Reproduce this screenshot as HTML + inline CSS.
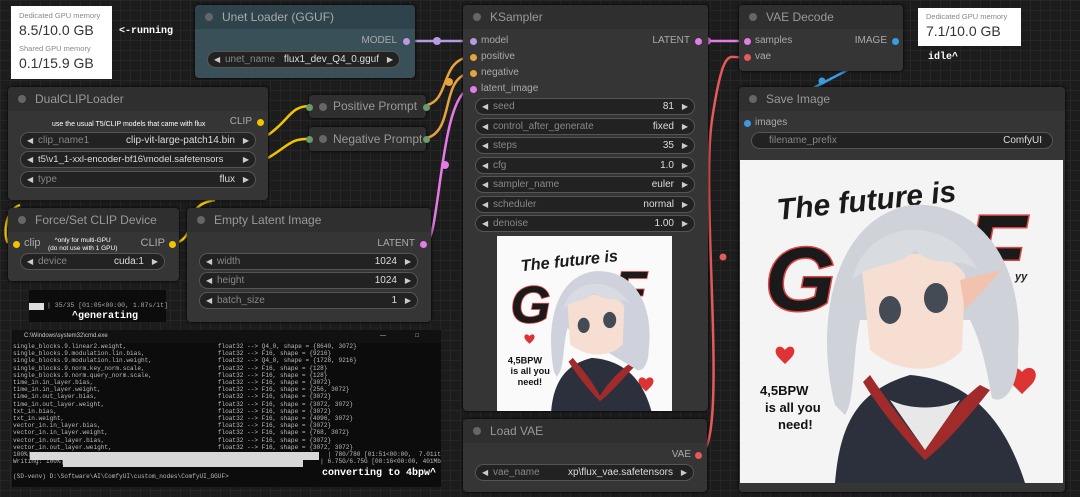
<!DOCTYPE html>
<html><head><meta charset="utf-8"><style>
*{box-sizing:border-box;margin:0;padding:0}
body{width:1080px;height:497px;overflow:hidden;position:relative;background:#1c1c1c;
background-image:linear-gradient(#262626 1px,transparent 1px),linear-gradient(90deg,#262626 1px,transparent 1px);background-size:10px 10px;
font-family:"Liberation Sans",sans-serif;color:#bbb;font-size:10px;white-space:nowrap}
.a{position:absolute}
.node{position:absolute;background:#353535;border-radius:4px;box-shadow:0 0 3px #000}
.hd{height:24px;background:#2f2f2f;border-radius:4px 4px 0 0;padding-left:27px;line-height:24px;font-size:12px;color:#999;position:relative}
.hd:before{content:"";position:absolute;left:10px;top:8px;width:8px;height:8px;border-radius:50%;background:#666}
.pill{position:absolute;height:17px;background:#222;border:1px solid #555;border-radius:9px;font-size:10px;line-height:15px;color:#888}
.pill .l{position:absolute;left:6px;color:#ccc;font-size:8px}
.pill .r{position:absolute;right:6px;color:#ccc;font-size:8px}
.pill .n{position:absolute;left:17px}
.pill .v{position:absolute;right:20px;color:#ddd}
.dot{position:absolute;width:7px;height:7px;border-radius:50%}
.slot{position:absolute;font-size:10px;color:#aaa}
.mono{font-family:"Liberation Mono",monospace}
</style></head><body>

<svg class="a" style="left:0;top:0" width="1080" height="497">
<g fill="none" stroke-width="2.5">
<path d="M408 41 H470" stroke="#b79be0"/>
<path d="M668 41 H742" stroke="#e67ae6"/>
<path d="M427 105 C450 100,440 60,470 57" stroke="#e8a33c"/>
<path d="M427 138 C455 130,440 78,470 73" stroke="#e8a33c"/>
<path d="M426 243 C440 240,440 95,470 89" stroke="#e67ae6"/>
<path d="M268 135 C290 120,290 105,312 106" stroke="#f2c400"/>
<path d="M268 158 C290 145,290 138,312 139" stroke="#f2c400"/>
<path d="M176 243 C200 235,180 205,215 200" stroke="#f2c400"/>
<path d="M8 243 C3 235,5 210,20 205" stroke="#f2c400"/>
<path d="M699 455 C730 450,700 200,712 120 S 730 60,742 57" stroke="#e85a5a"/>
<path d="M895 45 L800 95" stroke="#3a9be0"/>
</g>
<circle cx="437" cy="41" r="4" fill="#b79be0"/><circle cx="707" cy="41" r="4" fill="#e67ae6"/>
<circle cx="449" cy="82" r="4" fill="#e8a33c"/><circle cx="445" cy="165" r="4" fill="#e67ae6"/>
<circle cx="723" cy="257" r="3.5" fill="#e85a5a"/><circle cx="822" cy="81" r="3.5" fill="#3a9be0"/>
</svg>

<div class="a" style="left:11px;top:6px;width:101px;height:73px;background:#fff;padding:5px 8px;color:#333">
<div style="font-size:7.5px;color:#888">Dedicated GPU memory</div>
<div style="font-size:14px;margin-top:2px">8.5/10.0 GB</div>
<div style="font-size:7.5px;color:#888;margin-top:6px">Shared GPU memory</div>
<div style="font-size:14px;margin-top:2px">0.1/15.9 GB</div></div>
<div class="a mono" style="left:119px;top:26px;color:#fff;font-weight:bold;font-size:10px">&lt;-running</div>

<div class="node" style="left:195px;top:5px;width:220px;height:73px;background:#395058">
<div class="hd" style="background:#2e434b;color:#aaa">Unet Loader (GGUF)</div>
<div class="slot" style="right:18px;top:30px">MODEL</div><div class="dot" style="right:5px;top:33px;background:#b79be0"></div>
<div class="pill" style="left:12px;top:46px;width:193px"><span class="l">◀</span><span class="n">unet_name</span><span class="v">flux1_dev_Q4_0.gguf</span><span class="r">▶</span></div>
</div>

<div class="node" style="left:8px;top:87px;width:260px;height:113px">
<div class="hd">DualCLIPLoader</div>
<div class="a" style="left:44px;top:34px;font-size:7px;color:#fff">use the usual T5/CLIP models that came with flux</div>
<div class="slot" style="right:16px;top:29px">CLIP</div><div class="dot" style="right:4px;top:32px;background:#f2c400"></div>
<div class="pill" style="left:12px;top:45px;width:236px"><span class="l">◀</span><span class="n">clip_name1</span><span class="v">clip-vit-large-patch14.bin</span><span class="r">▶</span></div>
<div class="pill" style="left:12px;top:64px;width:236px"><span class="l">◀</span><span class="n" style="color:#ddd;font-size:9.5px">t5\v1_1-xxl-encoder-bf16\model.safetensors</span><span class="r">▶</span></div>
<div class="pill" style="left:12px;top:84px;width:236px"><span class="l">◀</span><span class="n">type</span><span class="v">flux</span><span class="r">▶</span></div>
</div>

<div class="node" style="left:309px;top:95px;width:117px;height:23px"><div class="hd" style="height:23px;line-height:23px;padding-left:24px;border-radius:4px">Positive Prompt</div></div>
<div class="node" style="left:309px;top:127px;width:117px;height:24px"><div class="hd" style="height:24px;padding-left:24px;border-radius:4px">Negative Prompt</div></div>
<div class="dot" style="left:306px;top:104px;background:#6a9a6a"></div><div class="dot" style="left:423px;top:104px;background:#6a9a6a"></div>
<div class="dot" style="left:306px;top:136px;background:#6a9a6a"></div><div class="dot" style="left:423px;top:136px;background:#6a9a6a"></div>

<div class="node" style="left:8px;top:208px;width:171px;height:73px">
<div class="hd">Force/Set CLIP Device</div>
<div class="dot" style="left:5px;top:33px;background:#f2c400"></div><div class="slot" style="left:16px;top:29px;font-size:11px">clip</div>
<div class="a" style="left:40px;top:29px;font-size:6.5px;color:#fff;text-align:center;line-height:8px">^only for multi-GPU<br>(do not use with 1 GPU)</div>
<div class="slot" style="right:14px;top:29px;font-size:11px">CLIP</div><div class="dot" style="right:3px;top:33px;background:#f2c400"></div>
<div class="pill" style="left:12px;top:45px;width:145px"><span class="l">◀</span><span class="n">device</span><span class="v">cuda:1</span><span class="r">▶</span></div>
</div>

<div class="node" style="left:187px;top:208px;width:244px;height:114px">
<div class="hd">Empty Latent Image</div>
<div class="slot" style="right:16px;top:30px">LATENT</div><div class="dot" style="right:4px;top:33px;background:#e67ae6"></div>
<div class="pill" style="left:12px;top:45px;width:219px"><span class="l">◀</span><span class="n">width</span><span class="v">1024</span><span class="r">▶</span></div>
<div class="pill" style="left:12px;top:64px;width:219px"><span class="l">◀</span><span class="n">height</span><span class="v">1024</span><span class="r">▶</span></div>
<div class="pill" style="left:12px;top:84px;width:219px"><span class="l">◀</span><span class="n">batch_size</span><span class="v">1</span><span class="r">▶</span></div>
</div>

<div class="a" style="left:29px;top:290px;width:137px;height:32px;background:#0c0c0c"></div>
<div class="a" style="left:29px;top:303px;width:15px;height:7px;background:#ddd"></div>
<div class="a mono" style="left:47px;top:302px;font-size:6.5px;color:#aaa">| 35/35 [01:05&lt;00:00,  1.87s/it]</div>
<div class="a mono" style="left:72px;top:311px;font-size:10px;color:#fff;font-weight:bold">^generating</div>

<div class="a" style="left:12px;top:330px;width:429px;height:157px;background:#0c0c0c;overflow:hidden">
<div style="height:13px;background:#111;font-size:6px;color:#ccc;padding:3px 0 0 12px">C:\Windows\system32\cmd.exe<span style="position:absolute;right:55px">—</span><span style="position:absolute;right:22px">□</span></div>
<pre class="mono" style="font-size:6.1px;line-height:7.2px;color:#bbb;padding-left:1px">single_blocks.9.linear2.weight,                         float32 --&gt; Q4_0, shape = {8640, 3072}
single_blocks.9.modulation.lin.bias,                    float32 --&gt; F16, shape = {9216}
single_blocks.9.modulation.lin.weight,                  float32 --&gt; Q4_0, shape = {1728, 9216}
single_blocks.9.norm.key_norm.scale,                    float32 --&gt; F16, shape = {128}
single_blocks.9.norm.query_norm.scale,                  float32 --&gt; F16, shape = {128}
time_in.in_layer.bias,                                  float32 --&gt; F16, shape = {3072}
time_in.in_layer.weight,                                float32 --&gt; F16, shape = {256, 3072}
time_in.out_layer.bias,                                 float32 --&gt; F16, shape = {3072}
time_in.out_layer.weight,                               float32 --&gt; F16, shape = {3072, 3072}
txt_in.bias,                                            float32 --&gt; F16, shape = {3072}
txt_in.weight,                                          float32 --&gt; F16, shape = {4096, 3072}
vector_in.in_layer.bias,                                float32 --&gt; F16, shape = {3072}
vector_in.in_layer.weight,                              float32 --&gt; F16, shape = {768, 3072}
vector_in.out_layer.bias,                               float32 --&gt; F16, shape = {3072}
vector_in.out_layer.weight,                             float32 --&gt; F16, shape = {3072, 3072}
100%|                                                                                 | 780/780 [01:51&lt;00:00,  7.01it/s]
Writing: 100%|                                                                      | 6.75G/6.75G [00:16&lt;00:00, 401Mbyte/s]

(SD-venv) D:\Software\AI\ComfyUI\custom_nodes\ComfyUI_GGUF&gt;</pre>
<div class="a" style="left:18px;top:122px;width:289px;height:8px;background:#d8d8d8"></div>
<div class="a" style="left:51px;top:130px;width:240px;height:7px;background:#d8d8d8"></div>
<div class="a mono" style="left:310px;top:138px;font-size:10px;color:#fff;font-weight:bold">converting to 4bpw^</div>
</div>

<div class="node" style="left:463px;top:5px;width:245px;height:406px">
<div class="hd">KSampler</div>
<div class="dot" style="left:7px;top:33px;background:#b79be0"></div><div class="slot" style="left:18px;top:30px">model</div>
<div class="dot" style="left:7px;top:49px;background:#e8a33c"></div><div class="slot" style="left:18px;top:46px">positive</div>
<div class="dot" style="left:7px;top:65px;background:#e8a33c"></div><div class="slot" style="left:18px;top:62px">negative</div>
<div class="dot" style="left:7px;top:81px;background:#e67ae6"></div><div class="slot" style="left:18px;top:78px">latent_image</div>
<div class="slot" style="right:18px;top:30px">LATENT</div><div class="dot" style="right:6px;top:33px;background:#e67ae6"></div>
<div class="pill" style="left:12px;top:93px;width:220px"><span class="l">◀</span><span class="n">seed</span><span class="v">81</span><span class="r">▶</span></div>
<div class="pill" style="left:12px;top:113px;width:220px"><span class="l">◀</span><span class="n">control_after_generate</span><span class="v">fixed</span><span class="r">▶</span></div>
<div class="pill" style="left:12px;top:132px;width:220px"><span class="l">◀</span><span class="n">steps</span><span class="v">35</span><span class="r">▶</span></div>
<div class="pill" style="left:12px;top:152px;width:220px"><span class="l">◀</span><span class="n">cfg</span><span class="v">1.0</span><span class="r">▶</span></div>
<div class="pill" style="left:12px;top:171px;width:220px"><span class="l">◀</span><span class="n">sampler_name</span><span class="v">euler</span><span class="r">▶</span></div>
<div class="pill" style="left:12px;top:191px;width:220px"><span class="l">◀</span><span class="n">scheduler</span><span class="v">normal</span><span class="r">▶</span></div>
<div class="pill" style="left:12px;top:210px;width:220px"><span class="l">◀</span><span class="n">denoise</span><span class="v">1.00</span><span class="r">▶</span></div>
</div>

<div class="node" style="left:463px;top:419px;width:244px;height:73px">
<div class="hd">Load VAE</div>
<div class="slot" style="right:16px;top:30px">VAE</div><div class="dot" style="right:5px;top:33px;background:#e85a5a"></div>
<div class="pill" style="left:12px;top:45px;width:219px"><span class="l">◀</span><span class="n">vae_name</span><span class="v">xp\flux_vae.safetensors</span><span class="r">▶</span></div>
</div>

<div class="node" style="left:739px;top:5px;width:164px;height:66px">
<div class="hd">VAE Decode</div>
<div class="dot" style="left:5px;top:33px;background:#e67ae6"></div><div class="slot" style="left:16px;top:30px">samples</div>
<div class="dot" style="left:5px;top:49px;background:#e85a5a"></div><div class="slot" style="left:16px;top:46px">vae</div>
<div class="slot" style="right:16px;top:30px">IMAGE</div><div class="dot" style="right:4px;top:33px;background:#3a9be0"></div>
</div>

<div class="a" style="left:918px;top:8px;width:103px;height:38px;background:#fff;padding:4px 8px;color:#333">
<div style="font-size:7.5px;color:#888">Dedicated GPU memory</div><div style="font-size:14px;margin-top:2px">7.1/10.0 GB</div></div>
<div class="a mono" style="left:928px;top:52px;color:#fff;font-weight:bold;font-size:10px">idle^</div>

<div class="node" style="left:739px;top:87px;width:326px;height:405px">
<div class="hd">Save Image</div>
<div class="dot" style="left:5px;top:33px;background:#3a9be0"></div><div class="slot" style="left:16px;top:30px">images</div>
<div class="pill" style="left:12px;top:45px;width:302px"><span class="n">filename_prefix</span><span class="v" style="right:10px">ComfyUI</span></div>
</div>

<svg class="a" style="left:740px;top:160px" width="323" height="323" viewBox="0 0 323 323">
<rect width="323" height="323" fill="#f4f4f4"/>
<g font-family="Liberation Sans,sans-serif" font-weight="bold" font-style="italic">
<text x="38" y="60" font-size="30" fill="#1a1a1a" transform="rotate(-6 38 60)">The future is</text>
<text x="25" y="150" font-size="90" fill="#1a1a1a" stroke="#d44" stroke-width="3" paint-order="stroke">G</text>
<text x="225" y="125" font-size="100" fill="#1a1a1a" stroke="#d44" stroke-width="3" paint-order="stroke">F</text>
<text x="275" y="120" font-size="11" fill="#222">yy</text>
<text x="20" y="235" font-size="13" fill="#111" font-style="normal">4,5BPW</text>
<text x="25" y="252" font-size="13" fill="#111" font-style="normal">is all you</text>
<text x="38" y="269" font-size="13" fill="#111" font-style="normal">need!</text>
</g>
<path d="M45 190 c-6 -8 -14 0 -6 8 l6 6 6 -6 c8 -8 0 -16 -6 -8z" fill="#d33"/>
<path d="M282 212 c-8 -10 -20 0 -10 12 l10 10 10 -10 c10 -12 -2 -22 -10 -12z" fill="#d33"/>
<path d="M95 323 C100 260,120 230,170 215 C230 220,265 260,285 323z" fill="#2b303c"/>
<path d="M130 215 C150 245,170 270,185 290 C200 265,220 240,240 225 L250 230 C230 255,205 285,185 300 C165 280,140 250,123 222z" fill="#a12a2a"/>
<path d="M150 240 L185 290 L220 240 C200 250,170 250,150 240z" fill="#e8e8e8"/>
<path d="M95 245 C75 170,90 60,170 45 C245 40,285 110,278 190 C280 230,262 245,252 238 C245 200,240 180,230 160 L120 160 C112 200,115 240,105 255z" fill="#cfd2d8"/>
<path d="M122 110 C130 90,210 85,225 115 L222 190 C200 215,160 215,130 190z" fill="#f6ded2"/>
<path d="M112 120 C125 60,205 50,238 110 C218 95,195 110,175 90 C155 110,135 100,112 120z" fill="#d8dbe0"/>
<ellipse cx="150" cy="150" rx="11" ry="14" fill="#444b55"/><ellipse cx="196" cy="138" rx="12" ry="15" fill="#444b55"/>
<path d="M220 120 L262 110 L225 150z" fill="#f2c2ae"/>
</svg>

<div class="a" style="left:497px;top:236px;width:175px;height:175px;overflow:hidden">
<svg width="175" height="175" viewBox="0 0 323 323">
<rect width="323" height="323" fill="#fafafa"/>
<g font-family="Liberation Sans,sans-serif" font-weight="bold" font-style="italic">
<text x="45" y="65" font-size="30" fill="#1a1a1a" transform="rotate(-6 45 65)">The future is</text>
<text x="25" y="160" font-size="95" fill="#1a1a1a" stroke="#d44" stroke-width="3" paint-order="stroke">G</text>
<text x="215" y="135" font-size="100" fill="#1a1a1a" stroke="#d44" stroke-width="3" paint-order="stroke">F</text>
<text x="20" y="235" font-size="17" fill="#111" font-style="normal">4,5BPW</text>
<text x="25" y="255" font-size="17" fill="#111" font-style="normal">is all you</text>
<text x="38" y="275" font-size="17" fill="#111" font-style="normal">need!</text>
</g>
<path d="M60 185 c-6 -8 -14 0 -6 8 l6 6 6 -6 c8 -8 0 -16 -6 -8z" fill="#d33"/>
<path d="M275 265 c-8 -10 -20 0 -10 12 l10 10 10 -10 c10 -12 -2 -22 -10 -12z" fill="#d33"/>
<path d="M100 323 C105 260,135 235,175 225 C240 230,270 270,285 323z" fill="#2b303c"/>
<path d="M140 225 C165 255,180 275,190 295 C205 270,225 250,245 235 L255 240 C235 260,210 290,190 305 C170 285,150 260,132 232z" fill="#a12a2a"/>
<path d="M105 250 C90 170,105 75,180 65 C255 60,290 130,280 210 C280 240,265 255,255 245 L130 170 C120 210,125 245,110 260z" fill="#cfd2dc"/>
<path d="M130 125 C140 105,220 100,235 130 L232 200 C210 225,165 225,135 200z" fill="#f6ded2"/>
<path d="M122 135 C135 80,210 70,245 125 C225 110,200 125,180 105 C160 125,140 115,122 135z" fill="#d8dbe2"/>
<ellipse cx="160" cy="165" rx="11" ry="14" fill="#444b55"/><ellipse cx="208" cy="155" rx="12" ry="15" fill="#444b55"/>
</svg></div>

</body></html>
